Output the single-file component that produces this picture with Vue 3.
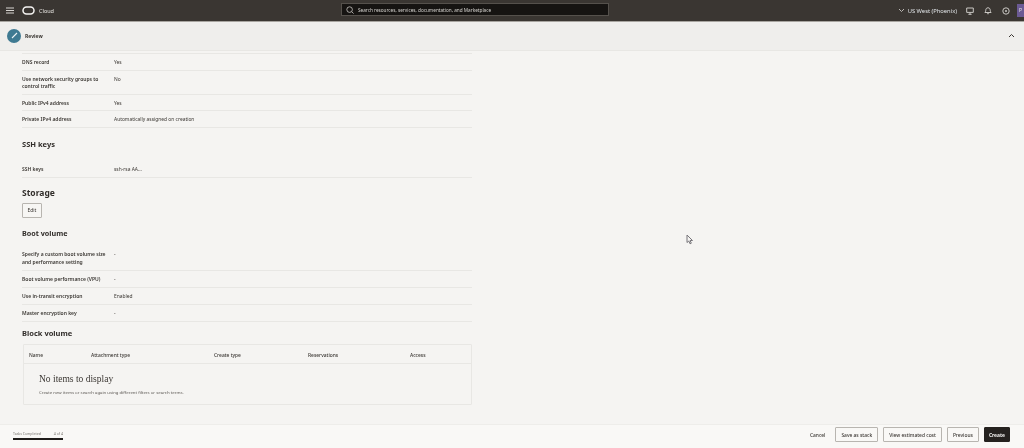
<template>
  <div class="page">
    <header class="topbar">
      <button class="menu-btn" aria-label="Menu">
        <svg width="8" height="7" viewBox="0 0 8 7"><path d="M0 1h8M0 3.5h8M0 6h8" stroke="#d8d6d2" stroke-width="1" /></svg>
      </button>
      <svg class="logo" width="13" height="9" viewBox="0 0 13 9"><rect x="1" y="1" width="11" height="7" rx="3.5" fill="none" stroke="#f5f4f2" stroke-width="1.5" /></svg>
      <span class="brand">Cloud</span>
      <div class="search">
        <svg width="8" height="8" viewBox="0 0 8 8"><circle cx="3.6" cy="3.6" r="2.8" fill="none" stroke="#c9c7c3" stroke-width=".8" /><path d="M5.7 5.7 7.6 7.6" stroke="#c9c7c3" stroke-width=".8" /></svg>
        <span>Search resources, services, documentation, and Marketplace</span>
      </div>
      <div class="top-right">
        <svg width="7" height="5" viewBox="0 0 7 5"><path d="M1 1l2.5 2.5L6 1" fill="none" stroke="#c9c7c3" stroke-width=".9" /></svg>
        <span class="region">US West (Phoenix)</span>
        <svg class="top-icon" width="8" height="8" viewBox="0 0 8 8"><path d="M.7 1h6.6v4.4H.7zM4 5.4v1.8M2.4 7.3h3.2" fill="none" stroke="#c9c7c3" stroke-width="1" /></svg>
        <svg class="top-icon" width="8" height="8" viewBox="0 0 8 8"><path d="M4 .8c1.5 0 2.2 1 2.2 2.4 0 1.3.6 1.8.9 2.3H.9c.3-.5.9-1 .9-2.3C1.8 1.8 2.5.8 4 .8zM3.2 6.7h1.6" fill="none" stroke="#c9c7c3" stroke-width="1" /></svg>
        <svg class="top-icon" width="8" height="8" viewBox="0 0 8 8"><circle cx="4" cy="4" r="3.2" fill="none" stroke="#c9c7c3" stroke-width="1" /><circle cx="4" cy="4" r="1" fill="#c9c7c3" /></svg>
        <div class="avatar">P</div>
      </div>
    </header>

    <section class="step-head">
      <div class="step-title">
        <span class="step-badge">
          <svg width="7" height="7" viewBox="0 0 7 7"><path d="M1 6 6 1" stroke="#eef3f5" stroke-width="1.1" /></svg>
        </span>
        <span>Review</span>
      </div>
      <svg width="7" height="5" viewBox="0 0 7 5"><path d="M1 4l2.5-2.5L6 4" fill="none" stroke="#3a3632" stroke-width="1" /></svg>
    </section>

    <main class="content">
      <div class="col">
        <dl class="details first">
          <div v-for="row in networkRows" :key="row.label" class="row">
            <dt>{{ row.label }}</dt>
            <dd>{{ row.value }}</dd>
          </div>
        </dl>

        <h3 class="sub ssh">SSH keys</h3>
        <dl class="details ssh-list">
          <div class="row">
            <dt>SSH keys</dt>
            <dd>ssh-rsa AA...</dd>
          </div>
        </dl>

        <h2 class="storage">Storage</h2>
        <button class="edit">Edit</button>

        <h3 class="sub boot">Boot volume</h3>
        <dl class="details boot-list">
          <div v-for="row in bootRows" :key="row.label" class="row">
            <dt>{{ row.label }}</dt>
            <dd>{{ row.value }}</dd>
          </div>
        </dl>

        <h3 class="sub block">Block volume</h3>
        <div class="table">
          <div class="thead">
            <span v-for="col in columns" :key="col">{{ col }}</span>
          </div>
          <div class="empty">
            <h4>No items to display</h4>
            <p>Create new items or search again using different filters or search terms.</p>
          </div>
        </div>
      </div>
    </main>

    <footer class="footer">
      <div class="progress">
        <div class="progress-text"><span>Tasks Completed</span><span>4 of 4</span></div>
        <div class="progress-bar"></div>
      </div>
      <div class="actions">
        <span class="cancel">Cancel</span>
        <button class="btn">Save as stack</button>
        <button class="btn">View estimated cost</button>
        <button class="btn">Previous</button>
        <button class="btn primary">Create</button>
      </div>
    </footer>

    <svg class="cursor" width="8" height="11" viewBox="0 0 8 11"><path d="M1 1v7.5l1.8-1.5 1.2 2.8 1.3-.6-1.2-2.7h2.4z" fill="#f5f4f2" stroke="#77757a" stroke-width="1" /></svg>
  </div>
</template>

<script setup>
const networkRows = [
  { label: 'DNS record', value: 'Yes' },
  { label: 'Use network security groups to control traffic', value: 'No' },
  { label: 'Public IPv4 address', value: 'Yes' },
  { label: 'Private IPv4 address', value: 'Automatically assigned on creation' }
]

const bootRows = [
  { label: 'Specify a custom boot volume size and performance setting', value: '-' },
  { label: 'Boot volume performance (VPU)', value: '-' },
  { label: 'Use in-transit encryption', value: 'Enabled' },
  { label: 'Master encryption key', value: '-' }
]

const columns = ['Name', 'Attachment type', 'Create type', 'Reservations', 'Access']
</script>

<style>
html, body {
  margin: 0;
  background: #f5f4f2;
}
</style>

<style scoped>
.page {
  position: relative;
  width: 1024px;
  height: 448px;
  overflow: hidden;
  display: flex;
  flex-direction: column;
  background: #f5f4f2;
  color: #3a3632;
  font-family: "Noto Sans", "Liberation Sans", sans-serif;
  font-size: 4.9px;
  filter: blur(.35px);
}

.topbar {
  height: 22px;
  box-sizing: border-box;
  flex: none;
  display: flex;
  align-items: center;
  position: relative;
  background: #3a3632;
  border-bottom: 1px solid #a8a5a0;
  color: #e8e6e2;
}

.menu-btn {
  width: 8px;
  height: 7px;
  margin-left: 6px;
  padding: 0;
  border: 0;
  background: none;
  display: flex;
}

.logo {
  margin-left: 8px;
}

.brand {
  margin-left: 4px;
  font-size: 5.5px;
}

.search {
  position: absolute;
  left: 341px;
  top: 3px;
  width: 268px;
  height: 13px;
  display: flex;
  align-items: center;
  gap: 4px;
  padding-left: 4px;
  box-sizing: border-box;
  background: #161412;
  border: 1px solid #55514c;
  color: #d8d6d2;
  font-size: 4.7px;
}

.top-right {
  margin-left: auto;
  display: flex;
  align-items: center;
  height: 100%;
}

.region {
  margin-left: 3px;
  margin-right: 9px;
  font-size: 5.8px;
  color: #dfe3e6;
}

.top-icon {
  margin-right: 10px;
}

.avatar {
  width: 7px;
  height: 13px;
  margin-left: -3px;
  background: #6b5a94;
  color: #e8e6e2;
  font-size: 5px;
  line-height: 13px;
  padding-left: 2px;
  box-sizing: border-box;
  overflow: hidden;
}

.step-head {
  height: 29px;
  flex: none;
  display: flex;
  align-items: center;
  justify-content: space-between;
  box-sizing: border-box;
  padding: 0 9px 1px 7px;
  background: #efeeec;
  border-bottom: 1px solid #e8e7e4;
}

.step-title {
  display: flex;
  align-items: center;
  gap: 4px;
  font-size: 5px;
  font-weight: 700;
}

.step-badge {
  width: 14px;
  height: 14px;
  border-radius: 50%;
  display: flex;
  align-items: center;
  justify-content: center;
  background: #3f7a92;
}

.content {
  flex: 1;
  min-height: 0;
  padding-left: 22px;
}

.col {
  width: 450px;
}

.details {
  margin: 0;
}

.first {
  border-top: 1px solid #e8e7e4;
  margin-top: 2px;
}

.row {
  display: flex;
  border-bottom: 1px solid #e8e7e4;
  padding: 5px 0 3px;
  line-height: 7.5px;
}

.boot-list .row {
  padding-bottom: 3.5px;
}

dt {
  width: 92px;
  flex: none;
  font-size: 5px;
  font-weight: 600;
}

dd {
  margin: 0;
}

.sub,
.storage {
  margin: 0;
  font-weight: 700;
  color: #312d2a;
}

.sub {
  font-size: 7.5px;
  line-height: 10px;
}

.ssh {
  margin-top: 11px;
}

.ssh-list {
  margin-top: 12.5px;
}

.storage {
  margin-top: 9px;
  font-size: 8.5px;
  line-height: 12px;
}

.edit {
  display: block;
  width: 20px;
  height: 15px;
  margin-top: 4px;
  padding: 0;
  border: 1px solid #b8b5b0;
  border-radius: 1px;
  background: #f7f6f4;
  color: #3a3632;
  font: inherit;
}

.boot {
  margin-top: 10px;
  font-size: 7.2px;
}

.boot-list {
  margin-top: 8.5px;
}

.block {
  margin-top: 6.5px;
}

.table {
  margin-top: 6px;
  height: 61px;
  box-sizing: border-box;
  margin-left: 1px;
  border: 1px solid #e8e7e4;
  border-radius: 1px;
}

.thead {
  display: grid;
  grid-template-columns: 62px 123px 94px 102px 1fr;
  height: 19px;
  box-sizing: border-box;
  padding: 7px 0 0 5px;
  line-height: 7px;
  border-bottom: 1px solid #e8e7e4;
  font-weight: 500;
}

.empty {
  padding: 9px 0 0 15px;
}

.empty h4 {
  margin: 0;
  font-family: "Liberation Serif", serif;
  font-weight: 400;
  font-size: 9.5px;
  line-height: 12px;
  color: #3a3632;
}

.empty p {
  margin: 4px 0 0;
  font-size: 4.3px;
  line-height: 6px;
  color: #5d5955;
}

.footer {
  height: 24px;
  flex: none;
  display: flex;
  align-items: center;
  justify-content: space-between;
  box-sizing: border-box;
  padding: 0 14px 4px 13px;
  background: #f9f8f6;
  border-top: 1px solid #eeedea;
}

.progress {
  width: 50px;
  margin-top: 2px;
}

.progress-text {
  display: flex;
  justify-content: space-between;
  font-size: 3.5px;
  line-height: 6px;
  color: #77736e;
}

.progress-bar {
  height: 2px;
  margin-top: 1px;
  background: #1f1c1a;
}

.actions {
  display: flex;
  align-items: center;
  gap: 5px;
}

.cancel {
  margin-right: 5px;
  font-weight: 500;
}

.btn {
  height: 15px;
  padding: 0 5px;
  border: 1px solid #b8b5b0;
  border-radius: 1px;
  background: #f9f8f6;
  color: #3a3632;
  font: inherit;
  font-weight: 500;
}

.primary {
  padding: 0 4px;
  background: #25221f;
  border-color: #25221f;
  color: #f5f4f2;
  font-weight: 700;
}

.cursor {
  position: absolute;
  left: 686px;
  top: 234px;
}
</style>
